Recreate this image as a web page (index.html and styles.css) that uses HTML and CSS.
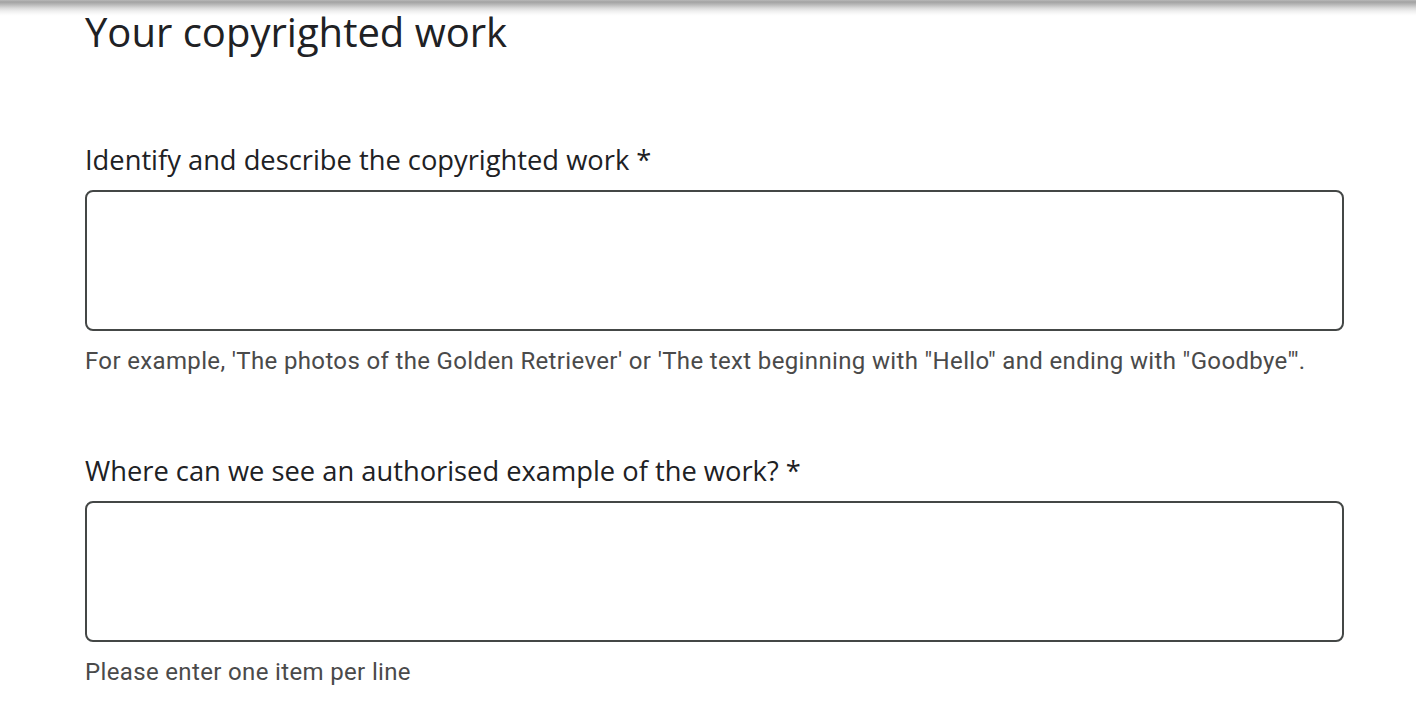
FILE: index.html
```html
<!DOCTYPE html>
<html lang="en">
<head>
<meta charset="utf-8">
<title>Your copyrighted work</title>
<link rel="stylesheet" href="styles.css">
</head>
<body>
<main class="form">
  <h1 class="title">Your copyrighted work</h1>
  <section class="field field-first">
    <label class="label" for="f1">Identify and describe the copyrighted work *</label>
    <textarea id="f1" class="box"></textarea>
    <p class="hint">For example, 'The photos of the Golden Retriever' or 'The text beginning with "Hello" and ending with "Goodbye"'.</p>
  </section>
  <section class="field">
    <label class="label" for="f2">Where can we see an authorised example of the work? *</label>
    <textarea id="f2" class="box"></textarea>
    <p class="hint">Please enter one item per line</p>
  </section>
</main>
</body>
</html>
```
FILE: styles.css
```css
html, body {
  margin: 0;
  padding: 0;
}
body {
  overflow: hidden;
  background:
    linear-gradient(to bottom, #b8b8b8 0px, #a2a2a2 2px, #bcbcbc 5px, #d9d9d9 8px, #eeeeee 11px, #fafafa 14px, #ffffff 16px) top left / 100% 16px no-repeat,
    #ffffff;
}
.form {
  padding: 0 72px 0 85px;
  display: flex;
  flex-direction: column;
}
.title {
  margin: 0;
  font-family: "Open Sans", "Noto Sans", sans-serif;
  font-weight: 500;
  font-size: 40px;
  line-height: 64px;
  color: #202124;
}
.field {
  display: flex;
  flex-direction: column;
  margin-top: 76px;
}
.field-first {
  margin-top: 78px;
}
.label {
  font-family: "Open Sans", "Noto Sans", sans-serif;
  font-size: 27.3px;
  line-height: 36px;
  color: #202124;
}
.box {
  margin: 12px 0 0;
  height: 141px;
  box-sizing: border-box;
  border: 2px solid #444746;
  border-radius: 8px;
  resize: none;
  outline: none;
  background: #fff;
  font-family: Roboto, sans-serif;
  font-size: 20px;
}
.hint {
  margin: 14px 0 0;
  font-family: Roboto, "Liberation Sans", sans-serif;
  font-size: 24px;
  line-height: 32px;
  letter-spacing: 0.35px;
  color: #4a4a4a;
}
```
